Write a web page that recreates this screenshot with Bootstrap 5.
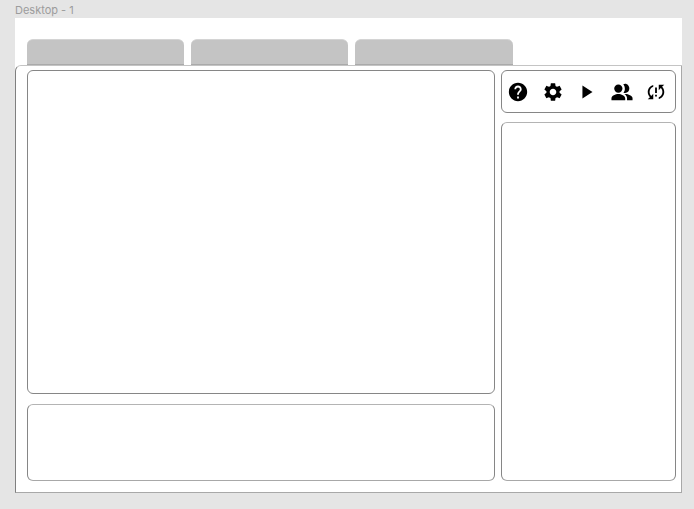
<!DOCTYPE html>
<html lang="en">
<head>
  <meta charset="UTF-8" />
  <meta name="viewport" content="width=device-width, initial-scale=1.0">
  <title>Desktop - 1</title>
  <link href="https://cdn.jsdelivr.net/npm/bootstrap@5.3.3/dist/css/bootstrap.min.css" rel="stylesheet"/>
  <style>
    body { background: #e5e5e5; font-family: "Inter", "Liberation Sans", sans-serif; }
    .page-wrap { width: 694px; height: 509px; padding: 3px 12px 0 15px; overflow: hidden; }
    .frame-label { font-size: 11px; line-height: 15px; color: #9c9c9c; height: 15px; }
    .frame-box { background: #fff; height: 475px; padding-top: 21px; }
    .tab-row { padding-left: 12px; gap: 7px; height: 26px; }
    .tab-item { width: 157px; height: 26px; background: #c4c4c4; border-radius: 6px 6px 0 0; border-top: 1px solid #d4d4d4; border-bottom: 1px solid #aaa; }
    .tab-item:last-child { width: 158px; }
    .outer-panel { height: 428px; border: 1px solid #a8a8a8; border-left-color: #808080; border-top-color: #c4c4c4; border-radius: 6px 0 0 0; padding: 4px 5px 10px 11px; gap: 6px; }
    .left-col { width: 468px; gap: 10px; }
    .right-col { width: 175px; gap: 9px; }
    .box-line { background: #fff; border: 1px solid #868686; border-radius: 6px; }
    .main-box { height: 324px; }
    .bottom-box { height: 77px; border-top-color: #b4b4b4; border-bottom-color: #a8a8a8; }
    .tool-box { height: 43px; padding-left: 5px; gap: 12.5px; }
    .tool-box svg { width: 22px; height: 22px; fill: #000; flex: none; }
    .side-box { height: 359px; border-top-color: #b4b4b4; border-bottom-color: #a8a8a8; }
  </style>
</head>
<body>
<div class="page-wrap">
  <div class="frame-label">Desktop - 1</div>
  <div class="frame-box">
    <!-- Tabs -->
    <div class="d-flex tab-row">
      <div class="tab-item"></div>
      <div class="tab-item"></div>
      <div class="tab-item"></div>
    </div>

    <div class="d-flex outer-panel">
      <div class="d-flex flex-column left-col">
        <div class="box-line main-box"></div>
        <div class="box-line bottom-box"></div>
      </div>
      <div class="d-flex flex-column right-col">
        <!-- Toolbar -->
        <div class="box-line tool-box d-flex align-items-center">
          <svg viewBox="0 0 24 24"><path d="M12 2C6.48 2 2 6.48 2 12s4.48 10 10 10 10-4.48 10-10S17.52 2 12 2zm1 17h-2v-2h2v2zm2.07-7.75l-.9.92C13.45 12.9 13 13.5 13 15h-2v-.5c0-1.1.45-2.1 1.17-2.83l1.24-1.26c.37-.36.59-.86.59-1.41 0-1.1-.9-2-2-2s-2 .9-2 2H8c0-2.21 1.79-4 4-4s4 1.79 4 4c0 .88-.36 1.68-.93 2.25z"/></svg>
          <svg viewBox="0 0 24 24"><path d="M19.14 12.94c.04-.3.06-.61.06-.94 0-.32-.02-.64-.07-.94l2.03-1.58c.18-.14.23-.41.12-.61l-1.92-3.32c-.12-.22-.37-.29-.59-.22l-2.39.96c-.5-.38-1.03-.7-1.62-.94l-.36-2.54c-.04-.24-.24-.41-.48-.41h-3.84c-.24 0-.43.17-.47.41l-.36 2.54c-.59.24-1.13.57-1.62.94l-2.39-.96c-.22-.08-.47 0-.59.22L2.74 8.87c-.12.21-.08.47.12.61l2.03 1.58c-.05.3-.09.63-.09.94s.02.64.07.94l-2.03 1.58c-.18.14-.23.41-.12.61l1.92 3.32c.12.22.37.29.59.22l2.39-.96c.5.38 1.03.7 1.62.94l.36 2.54c.05.24.24.41.48.41h3.84c.24 0 .44-.17.47-.41l.36-2.54c.59-.24 1.13-.56 1.62-.94l2.39.96c.22.08.47 0 .59-.22l1.92-3.32c.12-.22.07-.47-.12-.61l-2.01-1.58zM12 15.6c-1.98 0-3.6-1.62-3.6-3.6s1.62-3.6 3.6-3.6 3.6 1.62 3.6 3.6-1.62 3.6-3.6 3.6z"/></svg>
          <svg viewBox="0 0 24 24"><path d="M7 5v14l11-7z"/></svg>
          <svg viewBox="0 0 24 24"><path d="M8 3.800a4.500 4.500 0 1 0 0 9 4.500 4.500 0 0 0 0-9zM8 14.100c-3 0-7.500 1.800-7.500 4.800v2.200h15v-2.200c0-3-4.500-4.800-7.500-4.800zM15.500 3.100c-.8 0-1.500.2-2.100.5 1.100 1.200 1.700 2.900 1.700 4.800 0 1.700-.5 3.200-1.500 4.300.6.300 1.200.4 1.900.4 2.500 0 4.500-2 4.500-4.800S18 3.100 15.500 3.100zM16 14.100c-.5 0-1 0-1.400.1 1.800 1.100 2.900 2.800 2.900 4.900v2h6v-2.500c0-2.500-5-4.500-7.500-4.500z"/></svg>
          <svg viewBox="0 0 24 24"><path d="M3 12c0 2.210.91 4.200 2.360 5.640L3 20h6v-6l-2.240 2.240C5.680 15.150 5 13.660 5 12c0-2.610 1.670-4.830 4-5.650V4.260C5.550 5.150 3 8.270 3 12zm8 5h2v-2h-2v2zM21 4h-6v6l2.240-2.240C18.320 8.850 19 10.340 19 12c0 2.610-1.670 4.830-4 5.650v2.090c3.450-.89 6-4.010 6-7.740 0-2.210-.91-4.200-2.360-5.640L21 4zm-10 9h2V7h-2v6z"/></svg>
        </div>
        <div class="box-line side-box"></div>
      </div>
    </div>
  </div>
</div>
<script src="https://cdn.jsdelivr.net/npm/bootstrap@5.3.3/dist/js/bootstrap.bundle.min.js"></script>
</body>
</html>
